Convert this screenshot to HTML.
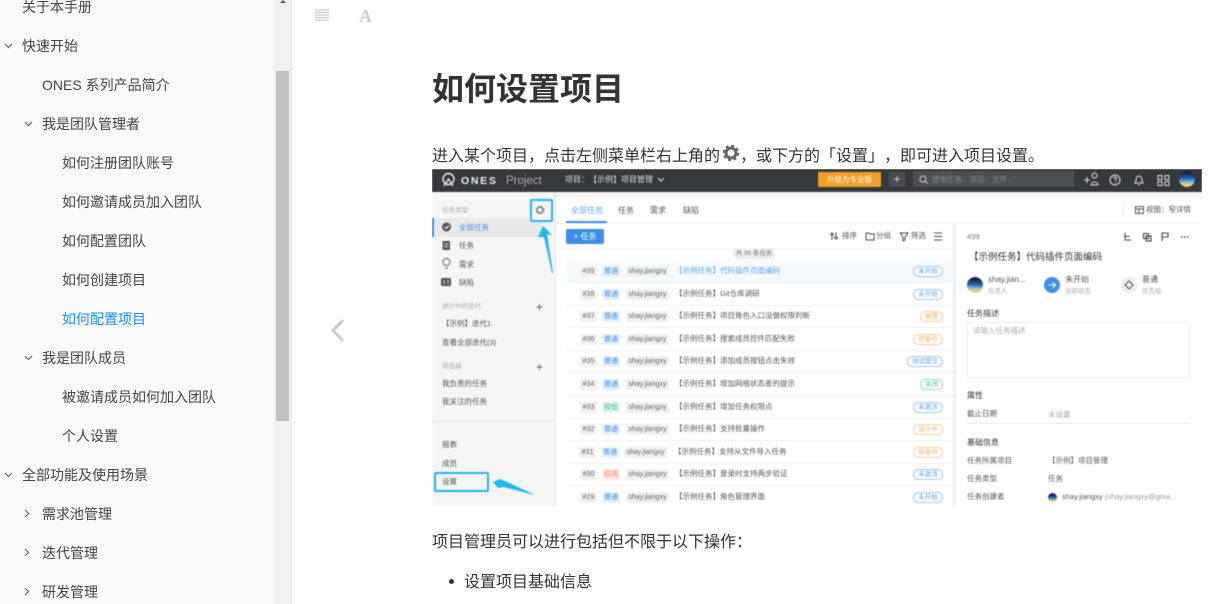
<!DOCTYPE html>
<html lang="zh"><head><meta charset="utf-8"><title>如何设置项目</title>
<style>
html,body{margin:0;padding:0;background:#fff}
body{width:1211px;height:604px;overflow:hidden;position:relative;font-family:"Liberation Sans","Noto Sans CJK SC",sans-serif;color:#333;text-spacing-trim:space-all}
.t{position:absolute;white-space:nowrap;line-height:0;height:0}
.b{position:absolute}
svg{position:absolute;overflow:visible}
.s{font-size:14px;color:#444}
#shot{position:absolute;left:0;top:0;width:1211px;height:604px;clip-path:inset(169px 9px 98px 432px);filter:blur(.45px)}
#shot .t{font-size:7.5px;color:#555;margin-top:1px}
.g{color:#aaa!important;font-size:6.5px!important}
.h{position:absolute;height:11px;margin-top:1px;border-radius:2px;background:#f0f0f0;line-height:11px;font-size:7px;color:#666;text-align:center}
.n{left:580px;width:17px}.p{left:602px;width:18px;background:#e3f0fd;color:#3a8fe6}.u{left:626px;width:43px}
.st{position:absolute;height:9px;margin-top:1px;line-height:9px;border:1px solid #9cc8f4;border-radius:7px;font-size:6.5px;color:#5aa2ea;text-align:center;background:#fff}
.o{border-color:#f8cf94;color:#f0b060}.gr{border-color:#93dcbc;color:#45bd8a}
.l{position:absolute;left:566px;width:387px;height:1px;background:#f0f0f0}
</style></head><body>

<div class="b" style="left:0;top:0;width:274px;height:604px;background:#fafafa"></div>
<div class="b" style="left:274px;top:0;width:17px;height:604px;background:#f1f1f1"></div>
<div class="b" style="left:291px;top:0;width:1px;height:604px;background:#e8e8e8"></div>
<div class="b" style="left:276px;top:71px;width:13px;height:350px;background:#c1c1c1"></div>
<svg style="left:278px;top:0" width="10" height="3"><path d="M2 3L5 0L8 3Z" fill="#555"/></svg>

<div class="t s" style="left:22px;top:7px">关于本手册</div>
<div class="t s" style="left:22px;top:46px">快速开始</div>
<div class="t s" style="left:42px;top:85px">ONES 系列产品简介</div>
<div class="t s" style="left:42px;top:124px">我是团队管理者</div>
<div class="t s" style="left:62px;top:163px">如何注册团队账号</div>
<div class="t s" style="left:62px;top:202px">如何邀请成员加入团队</div>
<div class="t s" style="left:62px;top:241px">如何配置团队</div>
<div class="t s" style="left:62px;top:280px">如何创建项目</div>
<div class="t s" style="left:62px;top:319px;color:#1890ff">如何配置项目</div>
<div class="t s" style="left:42px;top:358px">我是团队成员</div>
<div class="t s" style="left:62px;top:397px">被邀请成员如何加入团队</div>
<div class="t s" style="left:62px;top:436px">个人设置</div>
<div class="t s" style="left:22px;top:475px">全部功能及使用场景</div>
<div class="t s" style="left:42px;top:514px">需求池管理</div>
<div class="t s" style="left:42px;top:553px">迭代管理</div>
<div class="t s" style="left:42px;top:592px">研发管理</div>

<svg style="left:0;top:0" width="40" height="604" fill="none" stroke="#666" stroke-width="1.2">
<path d="M5 44l3.500 3.500l3.500-3.500M5 473l3.500 3.500l3.500-3.500M25 122l3.500 3.500l3.500-3.500M25 356l3.500 3.500l3.500-3.500M25 510l3.500 3.500l-3.500 3.500M25 549l3.500 3.500l-3.500 3.500M25 588l3.500 3.500l-3.500 3.500"/>
</svg>

<svg style="left:315px;top:9px" width="15" height="13"><path d="M0 1h14M0 3.500h14M0 6h14M0 8.500h14M0 11h14" stroke="#ccc" stroke-width="1.200"/></svg>
<div class="t" style="left:359px;top:16px;font:bold 18px 'Liberation Serif',serif;line-height:0;color:#ccc">A</div>
<svg style="left:330px;top:318px" width="16" height="25"><path d="M13 2L3 12.500L13 23" fill="none" stroke="#ccc" stroke-width="3"/></svg>

<div class="t" style="left:432px;top:89px;font-size:32px;font-weight:bold;color:#333">如何设置项目</div>
<div class="t" style="left:432px;top:157px;font-size:16px;color:#333">进入某个项目，点击左侧菜单栏右上角的</div>
<svg style="left:722px;top:144px" width="18" height="18" viewBox="0 0 18 18"><circle cx="9" cy="9" r="5" fill="none" stroke="#666" stroke-width="3"/><circle cx="9" cy="9" r="7" fill="none" stroke="#666" stroke-width="2.500" stroke-dasharray="2.800 2.700"/></svg>
<div class="t" style="left:740px;top:157px;font-size:16px;color:#333">，或下方的「设置」，即可进入项目设置。</div>

<div id="shot">
<div class="b" style="left:432px;top:169px;width:770px;height:337px;background:#f5f5f5"></div>
<div class="b" style="left:432px;top:169px;width:770px;height:23px;background:#36393c"></div>
<svg style="left:441px;top:172px" width="15" height="16" fill="none" stroke="#eee" stroke-width="1.400"><circle cx="7.500" cy="7" r="5.500"/><path d="M3 14L7.500 7L12 14"/></svg>
<div class="t" style="left:461px;top:180px;letter-spacing:1.700px"><span style="font-size:10.500px;font-weight:bold;color:#eee">ONES</span></div>
<div class="t" style="left:506px;top:180px"><span style="font-size:11.500px;color:#aaa">Project</span></div>
<div class="t" style="left:565px;top:179px"><span style="font-size:8px;color:#ddd">项目：【示例】项目管理</span></div>
<svg style="left:657px;top:177px" width="8" height="5"><path d="M1 1l3 3l3-3" fill="none" stroke="#ddd"/></svg>
<div class="b" style="left:818px;top:172px;width:63px;height:15px;background:#f0a028;border-radius:1px;color:#fff;font-size:7.500px;line-height:15px;text-align:center">升级为专业版</div>
<div class="b" style="left:889px;top:172px;width:16px;height:15px;background:#4a4d50;color:#ddd;font-size:12px;line-height:14px;text-align:center">+</div>
<div class="b" style="left:913px;top:171px;width:161px;height:16px;background:#4d5053"></div>
<svg style="left:919px;top:175px" width="9" height="9" fill="none" stroke="#ccc"><circle cx="4" cy="4" r="3"/><path d="M6 6l2.500 2.500"/></svg>
<div class="t" style="left:932px;top:179px"><span style="font-size:7.500px;color:#888">搜索任务、项目、文件...</span></div>
<svg style="left:1083px;top:172px" width="115" height="16" fill="none" stroke="#ddd">
<path d="M1 8h6M4 5v6M9 3.500a2.500 2.500 0 1 0 5 0a2.500 2.500 0 1 0-5 0M8 13c0-4 7-4 7 0z" />
<circle cx="32" cy="8" r="5"/><path d="M30.500 6.500a1.500 1.500 0 1 1 2 1.500v1M32.500 10.500v1"/>
<path d="M52 11c2-2 0-7 4-7s2 5 4 7zM55 13h2"/>
<path d="M75 3.500h4v4h-4zM82 3.500h4v4h-4zM75 9.500h4v4h-4zM82 9.500h4v4h-4z"/>
</svg>
<div class="b" style="left:1179px;top:171px;width:16px;height:16px;border-radius:50%;background:linear-gradient(#16204a 15%,#2a6fc0 50%,#8fc4d8 72%,#e8d070 85%)"></div>

<div class="b" style="left:432px;top:218px;width:111px;height:19px;background:#e9e9e9"></div>
<div class="b" style="left:432px;top:218px;width:2px;height:19px;background:#3a8fe6"></div>
<div class="t g" style="left:442px;top:210px">任务类型</div>
<div class="b" style="left:530px;top:199px;width:19px;height:19px;border:2px solid #1cb8f2;border-radius:2px;background:#f7f7f7"></div>
<svg style="left:535px;top:205px" width="10" height="10"><circle cx="5" cy="5" r="2.800" fill="none" stroke="#666" stroke-width="1.100"/><circle cx="5" cy="5" r="4" fill="none" stroke="#666" stroke-dasharray="1.500 1.800"/></svg>
<svg style="left:441px;top:221px" width="12" height="70">
<circle cx="5.500" cy="6" r="4.500" fill="#555"/><path d="M3.500 6l1.500 1.500l3-3" stroke="#fff" fill="none"/>
<rect x="1.500" y="20" width="7.500" height="9" rx="1" fill="#555"/><path d="M3 23h4.500M3 25.500h4.500" stroke="#fff" stroke-width=".8"/>
<circle cx="5.500" cy="41" r="3.500" fill="none" stroke="#666"/><path d="M4 47h3" stroke="#666"/>
<rect x="0" y="57" width="10" height="8" rx="1.500" fill="#555"/><path d="M3 59v4M7 59v4" stroke="#fff" stroke-width=".8"/>
</svg>
<div class="t" style="left:459px;top:227px"><span style="color:#3a8fe6">全部任务</span></div>
<div class="t" style="left:459px;top:245px">任务</div>
<div class="t" style="left:459px;top:264px">需求</div>
<div class="t" style="left:459px;top:282px">缺陷</div>
<div class="t g" style="left:442px;top:306px">进行中的迭代</div>
<div class="t" style="left:536px;top:306px"><span style="font-size:12px">+</span></div>
<div class="t" style="left:442px;top:323px">【示例】迭代1</div>
<div class="t" style="left:442px;top:342px">查看全部迭代(3)</div>
<div class="t g" style="left:442px;top:366px">筛选器</div>
<div class="t" style="left:536px;top:366px"><span style="font-size:12px">+</span></div>
<div class="t" style="left:442px;top:383px">我负责的任务</div>
<div class="t" style="left:442px;top:401px">我关注的任务</div>
<div class="b" style="left:432px;top:421px;width:123px;height:1px;background:#e4e4e4"></div>
<div class="t" style="left:442px;top:444px">报表</div>
<div class="t" style="left:442px;top:463px">成员</div>
<div class="t" style="left:442px;top:481px">设置</div>
<div class="b" style="left:434px;top:472px;width:51px;height:16px;border:2px solid #1cb8f2;border-radius:2px"></div>

<div class="b" style="left:555px;top:198px;width:647px;height:308px;background:#fff"></div>
<div class="b" style="left:555px;top:192px;width:1px;height:314px;background:#e6e6e6"></div>
<div class="b" style="left:556px;top:223px;width:646px;height:1px;background:#f0f0f0"></div>
<div class="t" style="left:571px;top:210px"><span style="font-size:8px;color:#5aa5ee">全部任务</span></div>
<div class="b" style="left:566px;top:221px;width:41px;height:2px;background:#3a8fe6"></div>
<div class="t" style="left:618px;top:210px"><span style="font-size:8px">任务</span></div>
<div class="t" style="left:650px;top:210px"><span style="font-size:8px">需求</span></div>
<div class="t" style="left:683px;top:210px"><span style="font-size:8px">缺陷</span></div>
<div class="b" style="left:1123px;top:202px;width:1px;height:16px;background:#e6e6e6"></div>
<svg style="left:1135px;top:206px" width="9" height="8" fill="none" stroke="#555"><rect x=".5" y=".5" width="8" height="7"/><path d="M.5 3h8M4 3v4.500"/></svg>
<div class="t" style="left:1146px;top:209px">视图：窄详情</div>
<div class="b" style="left:566px;top:229px;width:38px;height:15px;border-radius:2px;background:#3a8fe6;color:#fff;font-size:8px;line-height:15px;text-align:center">+ 任务</div>
<div class="b" style="left:556px;top:248px;width:397px;height:1px;background:#f0f0f0"></div>
<svg style="left:830px;top:231px" width="112" height="11" fill="none" stroke="#444">
<path d="M2 9V2M0 4l2-2l2 2M6 1v7M4 6l2 2l2-2"/>
<path d="M36 2h3l1 1h4v6h-8z"/>
<path d="M70 2h8l-3 4v3l-2 1v-4z"/>
<path d="M104 2h8M104 5.500h8M104 9h8"/>
</svg>
<div class="t" style="left:842px;top:235px">排序</div>
<div class="t" style="left:876px;top:235px">分组</div>
<div class="t" style="left:911px;top:235px">筛选</div>
<div class="b" style="left:733px;top:248px;width:42px;height:11px;background:#eee;color:#777;font-size:6.500px;line-height:12px;text-align:center">共 36 条任务</div>

<div class="b" style="left:566px;top:260px;width:387px;height:22px;background:#f6faff"></div>
<div class="l" style="top:282px"></div><div class="l" style="top:305px"></div><div class="l" style="top:327px"></div><div class="l" style="top:350px"></div><div class="l" style="top:372px"></div><div class="l" style="top:395px"></div><div class="l" style="top:418px"></div><div class="l" style="top:440px"></div><div class="l" style="top:463px"></div><div class="l" style="top:485px"></div>

<div class="h n" style="top:265px">#39</div><div class="h p" style="top:265px">普通</div><div class="h u" style="top:265px">shay.jiangxy</div><div class="t" style="left:675px;top:270px"><span style="color:#5aa5ee">【示例任务】代码插件页面编码</span></div><div class="st" style="left:913px;top:265px;width:28px">未开始</div>
<div class="h n" style="top:288px">#38</div><div class="h p" style="top:288px">普通</div><div class="h u" style="top:288px">shay.jiangxy</div><div class="t" style="left:675px;top:293px">【示例任务】Git仓库调研</div><div class="st" style="left:913px;top:288px;width:28px">未开始</div>
<div class="h n" style="top:310px">#37</div><div class="h p" style="top:310px">普通</div><div class="h u" style="top:310px">shay.jiangxy</div><div class="t" style="left:675px;top:315px">【示例任务】项目角色入口没做权限判断</div><div class="st o" style="left:920px;top:310px;width:21px">搁置</div>
<div class="h n" style="top:333px">#36</div><div class="h p" style="top:333px">普通</div><div class="h u" style="top:333px">shay.jiangxy</div><div class="t" style="left:675px;top:338px">【示例任务】搜索成员控件匹配失败</div><div class="st o" style="left:913px;top:333px;width:28px">修复中</div>
<div class="h n" style="top:355px">#35</div><div class="h p" style="top:355px">普通</div><div class="h u" style="top:355px">shay.jiangxy</div><div class="t" style="left:675px;top:360px">【示例任务】添加成员按钮点击失效</div><div class="st" style="left:907px;top:355px;width:34px">测试提交</div>
<div class="h n" style="top:378px">#34</div><div class="h p" style="top:378px">普通</div><div class="h u" style="top:378px">shay.jiangxy</div><div class="t" style="left:675px;top:383px">【示例任务】增加网络状态差的提示</div><div class="st gr" style="left:920px;top:378px;width:21px">关闭</div>
<div class="h n" style="top:401px">#33</div><div class="h p" style="top:401px;background:#dff6ec;color:#45bd8a">较低</div><div class="h u" style="top:401px">shay.jiangxy</div><div class="t" style="left:675px;top:406px">【示例任务】增加任务权限点</div><div class="st" style="left:913px;top:401px;width:28px">未激活</div>
<div class="h n" style="top:423px">#32</div><div class="h p" style="top:423px">普通</div><div class="h u" style="top:423px">shay.jiangxy</div><div class="t" style="left:675px;top:428px">【示例任务】支持批量操作</div><div class="st o" style="left:913px;top:423px;width:28px">设计中</div>
<div class="h n" style="top:446px;left:579px">#31</div><div class="h p" style="top:446px;left:601px">普通</div><div class="h u" style="top:446px;left:624px">shay.jiangxy</div><div class="t" style="left:674px;top:451px">【示例任务】支持从文件导入任务</div><div class="st o" style="left:913px;top:446px;width:28px">研发中</div>
<div class="h n" style="top:468px">#30</div><div class="h p" style="top:468px;background:#fdeae6;color:#f0806a">较高</div><div class="h u" style="top:468px">shay.jiangxy</div><div class="t" style="left:675px;top:473px">【示例任务】登录时支持两步验证</div><div class="st" style="left:913px;top:468px;width:28px">未激活</div>
<div class="h n" style="top:491px">#29</div><div class="h p" style="top:491px">普通</div><div class="h u" style="top:491px">shay.jiangxy</div><div class="t" style="left:675px;top:496px">【示例任务】角色管理界面</div><div class="st" style="left:913px;top:491px;width:28px">未开始</div>

<div class="b" style="left:953px;top:224px;width:3px;height:282px;background:#eee"></div>
<div class="t" style="left:967px;top:236px"><span style="color:#777">#39</span></div>
<svg style="left:1124px;top:232px" width="70" height="10" fill="none" stroke="#444" stroke-width="1.100">
<path d="M1 1v7h6M1 4.500h5"/><rect x="19.500" y="1.500" width="5" height="5"/><rect x="22" y="4" width="5" height="5"/><path d="M38 9V1h6v4h-6"/><path d="M57 5h1.500M60 5h1.500M63 5h1.500" stroke-width="1.500"/>
</svg>
<div class="t" style="left:969px;top:257px"><span style="font-size:9.500px;color:#333">【示例任务】代码插件页面编码</span></div>
<div class="b" style="left:967px;top:277px;width:16px;height:16px;border-radius:50%;background:linear-gradient(#16204a 15%,#2a6fc0 50%,#8fc4d8 72%,#e8d070 85%)"></div>
<div class="t" style="left:988px;top:279px"><span style="font-size:8px">shay.jian...</span></div>
<div class="t g" style="left:988px;top:291px">负责人</div>
<div class="b" style="left:1044px;top:277px;width:16px;height:16px;border-radius:50%;background:#3a8fe6"></div>
<svg style="left:1044px;top:277px" width="16" height="16" fill="none" stroke="#fff"><path d="M4.500 8h7M8.500 5l3 3l-3 3"/></svg>
<div class="t" style="left:1065px;top:279px"><span style="font-size:8px">未开始</span></div>
<div class="t g" style="left:1065px;top:291px">当前状态</div>
<div class="b" style="left:1121px;top:277px;width:16px;height:16px;border-radius:50%;background:#eee"></div>
<svg style="left:1121px;top:277px" width="16" height="16" fill="none" stroke="#555"><path d="M8 4l4 4l-4 4l-4-4z"/></svg>
<div class="t" style="left:1142px;top:279px"><span style="font-size:8px">普通</span></div>
<div class="t g" style="left:1142px;top:291px">优先级</div>
<div class="t" style="left:967px;top:313px"><span style="font-size:8px;color:#333">任务描述</span></div>
<div class="b" style="left:967px;top:322px;width:221px;height:54px;border:1px solid #ececec;border-radius:2px"></div>
<div class="t g" style="left:973px;top:330px;font-size:7.500px!important">请输入任务描述</div>
<div class="t" style="left:967px;top:395px"><span style="font-size:8px;color:#333">属性</span></div>
<div class="t" style="left:967px;top:413px">截止日期</div>
<div class="t g" style="left:1048px;top:414px;font-size:7.500px!important">未设置</div>
<div class="b" style="left:967px;top:423px;width:223px;height:1px;background:#e8e8e8"></div>
<div class="t" style="left:967px;top:442px"><span style="font-size:8px;color:#333">基础信息</span></div>
<div class="t" style="left:967px;top:460px">任务所属项目</div>
<div class="t" style="left:1048px;top:460px">【示例】项目管理</div>
<div class="t" style="left:967px;top:478px">任务类型</div>
<div class="t" style="left:1048px;top:478px">任务</div>
<div class="t" style="left:967px;top:496px">任务创建者</div>
<div class="b" style="left:1048px;top:493px;width:9px;height:9px;border-radius:50%;background:linear-gradient(#16204a 20%,#2a6fc0 55%,#e8d070 85%)"></div>
<div class="t" style="left:1062px;top:496px">shay.jiangxy <span style="color:#999">(shay.jiangxy@gma...</span></div>

<svg style="left:432px;top:169px" width="770" height="337">
<path d="M111 57L120 66L115 65L121 104L120 104L112 68L106 68Z" fill="#1cb8f2"/>
<path d="M61 313L68 310L75 313L101 325L100 325.500L72 318L66 319Z" fill="#1cb8f2"/>
</svg>
</div>

<div class="t" style="left:432px;top:543px;font-size:16px;color:#333">项目管理员可以进行包括但不限于以下操作：</div>
<div class="b" style="left:449px;top:579px;width:5px;height:5px;border-radius:50%;background:#333"></div>
<div class="t" style="left:464px;top:583px;font-size:16px;color:#333">设置项目基础信息</div>
</body></html>
